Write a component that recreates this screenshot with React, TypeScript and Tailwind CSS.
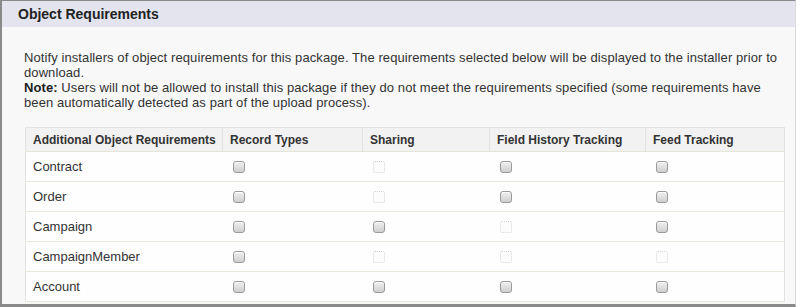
import React from 'react';

type Box = 'on' | 'off';

const rows: { name: string; cells: Box[] }[] = [
    { name: 'Contract', cells: ['on', 'off', 'on', 'on'] },
    { name: 'Order', cells: ['on', 'off', 'on', 'on'] },
    { name: 'Campaign', cells: ['on', 'on', 'off', 'on'] },
    { name: 'CampaignMember', cells: ['on', 'off', 'off', 'off'] },
    { name: 'Account', cells: ['on', 'on', 'on', 'on'] },
];

const Checkbox = ({ state }: { state: Box }) =>
    state === 'on' ? (
        <span className="block w-[12px] h-[12px] rounded-[3px] border border-[#9a9a9a] bg-gradient-to-b from-[#f0f0f0] to-[#cfcfcf] shadow-[inset_0_1px_0_#fff]" />
    ) : (
        <span className="block w-[12px] h-[12px] rounded-[2px] border border-dotted border-[#d6d6d6] bg-[#fcfcfc]" />
    );

const App = () => {
    const headers = ['Additional Object Requirements', 'Record Types', 'Sharing', 'Field History Tracking', 'Feed Tracking'];
    const widths = ['w-[197px]', 'w-[140px]', 'w-[127px]', 'w-[156px]', 'w-[139px]'];

    return (
        <div className="w-[800px] h-[307px] bg-white font-['Liberation_Sans',Arial,sans-serif] overflow-hidden">
            <div className="w-[796px] h-[307px] border-l-2 border-t border-b-[3px] border-[#8a8a8a] border-r border-r-[#d9d9d9] bg-[#f8f8f8] flex flex-col">
                {/* Section title */}
                <div className="h-[26px] shrink-0 bg-[#e3e4ee] pl-[16px] flex items-center">
                    <h2 className="text-[14px] font-bold text-[#222] leading-[16px]">Object Requirements</h2>
                </div>

                <div className="ml-[22px] w-[768px] pt-[23px] text-[13px] leading-[15px] tracking-[0.09px] text-[#333]">
                    <p>
                        Notify installers of object requirements for this package. The requirements selected below will be displayed to the installer prior to download.
                    </p>
                    <p>
                        <b className="text-[#222]">Note:</b> Users will not be allowed to install this package if they do not meet the requirements specified (some requirements have been automatically detected as part of the upload process).
                    </p>
                </div>

                {/* Requirements table */}
                <div className="pl-[23px] pt-[17px]">
                    <table className="w-[759px] border-collapse table-fixed">
                        <thead>
                            <tr className="h-[24px] bg-[#f2f2f2]">
                                {headers.map((h, i) => (
                                    <th
                                        key={h}
                                        className={`${widths[i]} text-left font-bold text-[12px] text-[#333] pl-[7px] border border-[#e3e3e3] border-b-[#e6e6d8] p-0`}
                                    >
                                        {h}
                                    </th>
                                ))}
                            </tr>
                        </thead>
                        <tbody className="bg-[#fefefe]">
                            {rows.map((r) => (
                                <tr key={r.name} className="h-[30px] border-b border-[#e8e8da]">
                                    <td className="pl-[7px] text-[13px] text-[#333] border-l border-[#e3e3e3]">{r.name}</td>
                                    {r.cells.map((c, i) => (
                                        <td key={i} className={`pl-[10px] ${i === 3 ? 'border-r border-[#e3e3e3]' : ''}`}>
                                            <Checkbox state={c} />
                                        </td>
                                    ))}
                                </tr>
                            ))}
                        </tbody>
                    </table>
                </div>
            </div>
        </div>
    );
};

export default App;
